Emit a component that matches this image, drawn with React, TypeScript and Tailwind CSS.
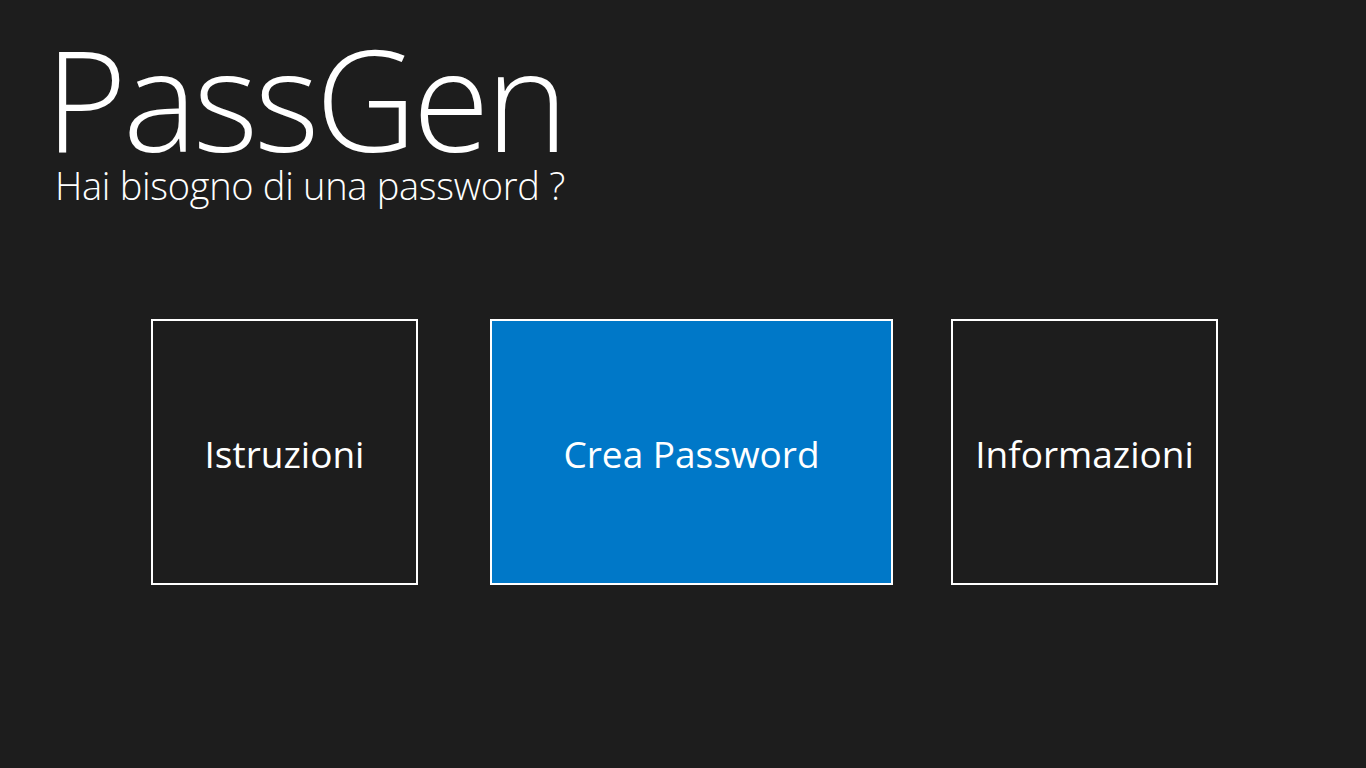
import React from "react";

export default function App() {
  const font = { fontFamily: '"Open Sans", "Noto Sans", sans-serif' };
  return (
    <div
      className="w-[1366px] h-[768px] bg-[#1d1d1d] text-white overflow-hidden flex flex-col"
      style={font}
    >
      <div className="pl-[45px] pt-[31px] flex flex-col">
        <div className="text-[140px] font-light leading-[134px] tracking-[-4px] whitespace-nowrap">PassGen</div>
        <div className="pl-[10px] text-[38px] font-light leading-[40px] tracking-[-0.3px] whitespace-nowrap">
          Hai bisogno di una password ?
        </div>
      </div>
      <div className="flex pl-[151px] mt-[114px]">
        <div className="w-[267px] h-[266px] border-2 border-white flex items-center justify-center pt-[4px] text-[37px]">
          Istruzioni
        </div>
        <div className="ml-[72px] w-[403px] h-[266px] border-2 border-white bg-[#0078c8] flex items-center justify-center pt-[4px] text-[37px]">
          Crea Password
        </div>
        <div className="ml-[58px] w-[267px] h-[266px] border-2 border-white flex items-center justify-center pt-[4px] text-[37px]">
          Informazioni
        </div>
      </div>
    </div>
  );
}
